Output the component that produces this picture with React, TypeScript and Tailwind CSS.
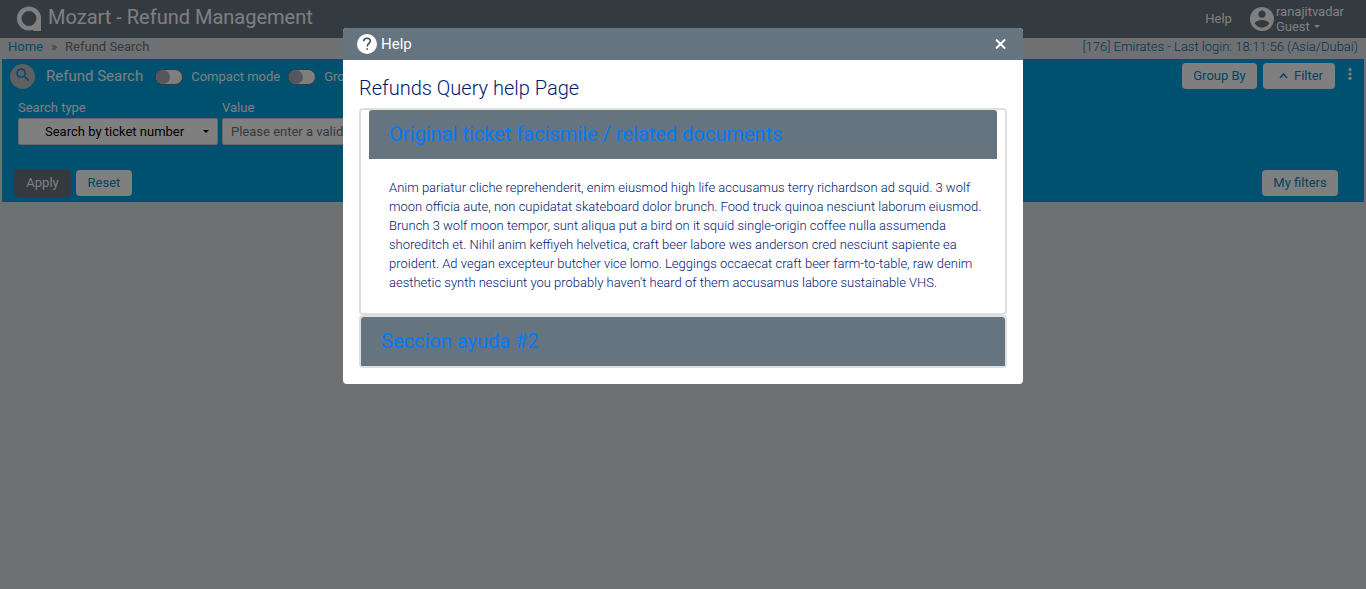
import { useState, type ReactNode } from 'react';

const lightButton =
  'flex h-[26px] items-center justify-center rounded bg-white text-[#008ac2]';

function Logo() {
  return (
    <svg className="h-[26px] w-[26px]" viewBox="0 0 26 26" aria-hidden="true">
      <circle cx="13" cy="12.500" r="9.800" fill="none" stroke="#fff" strokeWidth="4.600" />
      <path d="M20.500 14H25V25H17.500L16.500 21.500Z" fill="#fff" />
    </svg>
  );
}

function UserIcon() {
  return (
    <svg className="h-6 w-6" viewBox="2 2 20 20" fill="#fff" aria-hidden="true">
      <path d="M12 2C6.48 2 2 6.48 2 12s4.48 10 10 10 10-4.48 10-10S17.52 2 12 2zm0 3c1.66 0 3 1.34 3 3s-1.34 3-3 3-3-1.34-3-3 1.34-3 3-3zm0 14.2c-2.5 0-4.71-1.28-6-3.22.03-1.99 4-3.08 6-3.08 1.99 0 5.97 1.09 6 3.08-1.29 1.94-3.5 3.22-6 3.22z" />
    </svg>
  );
}

function SearchIcon() {
  return (
    <svg className="mb-[2px] h-[18px] w-[18px]" viewBox="0 0 24 24" fill="#0092cc" aria-hidden="true">
      <path d="M15.5 14h-.79l-.28-.27C15.41 12.59 16 11.11 16 9.5 16 5.91 13.09 3 9.5 3S3 5.91 3 9.5 5.91 16 9.5 16c1.61 0 3.09-.59 4.23-1.57l.27.28v.79l5 4.99L20.49 19l-4.99-5zm-6 0C7.01 14 5 11.99 5 9.5S7.01 5 9.5 5 14 7.01 14 9.5 11.99 14 9.5 14z" />
    </svg>
  );
}

function Toggle({ label }: { label: string }) {
  return (
    <label className="flex items-center gap-2 text-white">
      <input type="checkbox" className="peer sr-only" />
      <span className="flex h-4 w-[28px] items-center rounded-full border border-[#687582] bg-white peer-checked:justify-end">
        <span className="h-[14px] w-[14px] rounded-full bg-[#a9aebb]" />
      </span>
      <span className="whitespace-nowrap">{label}</span>
    </label>
  );
}

function TopBar() {
  return (
    <header className="flex h-[38px] items-center justify-between bg-[#667480] pl-4 pr-[22px] text-white">
      <div className="flex items-center gap-[6px]">
        <Logo />
        <h1 className="pb-1 text-xl leading-6">Mozart - Refund Management</h1>
      </div>
      <div className="flex items-center gap-[18px]">
        <a href="#help">Help</a>
        <button type="button" className="flex items-center gap-[2px] text-left">
          <UserIcon />
          <span className="leading-[15px]">
            <span className="block">ranajitvadar</span>
            <span className="flex items-center gap-1">
              Guest
              <svg className="h-[3px] w-[6px]" viewBox="0 0 6 3" fill="#fff" aria-hidden="true">
                <path d="M0 0h6L3 3z" />
              </svg>
            </span>
          </span>
        </button>
      </div>
    </header>
  );
}

function Breadcrumb() {
  return (
    <nav aria-label="Breadcrumb" className="flex h-[21px] justify-between px-2 leading-[18px]">
      <div className="flex gap-2">
        <a href="#home" className="text-[#009ad8]">Home</a>
        <span className="text-[#687582]">»</span>
        <span className="text-[#687582]">Refund Search</span>
      </div>
      <span className="font-light text-[#006aa8]">[176] Emirates - Last login: 18:11:56 (Asia/Dubai)</span>
    </nav>
  );
}

function SearchPanel() {
  return (
    <section className="mx-[2px] flex h-[143px] flex-col justify-between bg-[#00a2de] pb-[5px]">
      <div>
        <div className="flex justify-between pl-2 pr-[5px] pt-1">
          <div className="flex items-center">
            <span className="mr-[11px] flex h-[25px] w-[25px] items-center justify-center rounded-full bg-[#bcbec2]">
              <SearchIcon />
            </span>
            <h2 className="mr-3 text-[15px] text-white">Refund Search</h2>
            <div className="flex gap-2 pt-[2px]">
              <Toggle label="Compact mode" />
              <Toggle label="Group" />
            </div>
          </div>
          <div className="flex items-center gap-[6px]">
            <button type="button" className={`${lightButton} w-[75px]`}>Group By</button>
            <button type="button" className={`${lightButton} w-[72px] gap-[6px] pl-1`}>
              <svg className="h-[6px] w-[9px]" viewBox="0 0 9 6" fill="none" stroke="#0082c0" strokeWidth="1.5" aria-hidden="true">
                <path d="M1 5l3.500-4L8 5" />
              </svg>
              Filter
            </button>
            <button type="button" aria-label="More options" className="flex h-[26px] w-[18px] justify-center pt-[5px]">
              <svg className="h-3 w-1" viewBox="0 0 4 12" fill="#fff" aria-hidden="true">
                <circle cx="2" cy="1.700" r="1.600" />
                <circle cx="2" cy="6" r="1.600" />
                <circle cx="2" cy="10.300" r="1.600" />
              </svg>
            </button>
          </div>
        </div>
        <div className="flex gap-1 px-4 pt-[9px]">
          <div className="w-[200px]">
            <label htmlFor="type" className="block leading-5 text-white">Search type</label>
            <div className="relative">
              <select id="type" className="h-[27px] w-full appearance-none rounded-[2px] border border-[#d0d0d0] bg-white pl-[26px] text-black">
                <option>Search by ticket number</option>
              </select>
              <svg className="pointer-events-none absolute right-[9px] top-3 h-[3px] w-[6px]" viewBox="0 0 6 3" aria-hidden="true">
                <path d="M0 0h6L3 3z" />
              </svg>
            </div>
          </div>
          <div className="w-[200px]">
            <label htmlFor="value" className="block leading-5 text-white">Value</label>
            <input id="value" placeholder="Please enter a valid value" className="h-[27px] w-full rounded-[2px] border border-[#d0d0d0] bg-white px-2 placeholder:text-[#687582]" />
          </div>
        </div>
      </div>
      <div className="flex items-center justify-between pl-3 pr-[26px]">
        <div className="flex items-center gap-[5px]">
          <button type="button" className="h-7 w-[57px] rounded bg-[#667480] text-white">Apply</button>
          <button type="button" className={`${lightButton} w-14`}>Reset</button>
        </div>
        <button type="button" className={`${lightButton} w-[76px]`}>My filters</button>
      </div>
    </section>
  );
}

function HelpSection({ title, open, onToggle, children }: { title: string; open: boolean; onToggle: () => void; children: ReactNode }) {
  return (
    <div className={`rounded border-2 border-[#dfdfdf] ${open ? 'px-2' : ''}`}>
      <h3 className="rounded-t-[3px] bg-[#667480] text-xl text-[#007bff]">
        <button type="button" aria-expanded={open} onClick={onToggle} className="block h-[49px] w-full px-5 pb-[2px] text-left">
          {title}
        </button>
      </h3>
      {open && <div className="pb-[21px] pl-5 pr-3 pt-[19px] font-light leading-[19px]">{children}</div>}
    </div>
  );
}

function HelpDialog({ onClose }: { onClose: () => void }) {
  const [openSection, setOpenSection] = useState(1);
  const toggle = (n: number) => setOpenSection(openSection === n ? 0 : n);
  const text =
    "Anim pariatur cliche reprehenderit, enim eiusmod high life accusamus terry richardson ad squid. 3 wolf moon officia aute, non cupidatat skateboard dolor brunch. Food truck quinoa nesciunt laborum eiusmod. Brunch 3 wolf moon tempor, sunt aliqua put a bird on it squid single-origin coffee nulla assumenda shoreditch et. Nihil anim keffiyeh helvetica, craft beer labore wes anderson cred nesciunt sapiente ea proident. Ad vegan excepteur butcher vice lomo. Leggings occaecat craft beer farm-to-table, raw denim aesthetic synth nesciunt you probably haven't heard of them accusamus labore sustainable VHS.";
  return (
    <div className="fixed inset-0 flex items-start justify-center overflow-auto bg-black/50 pt-7">
      <div role="dialog" aria-modal="true" aria-labelledby="help-title" className="w-full max-w-[680px] overflow-hidden rounded bg-white">
        <div className="flex h-8 items-center justify-between bg-[#667480] pl-[14px] pr-[13px] text-white">
          <div className="flex items-center gap-1">
            <span aria-hidden="true" className="flex h-5 w-5 items-center justify-center rounded-full bg-white">
              <svg className="h-[14px] w-[10px]" viewBox="0 0 10 14" fill="none" stroke="#454d56" strokeWidth="1.500">
                <path d="M1.700 4.200C1.700 2.200 3 1.200 5 1.200S8.300 2.300 8.300 4C8.300 6.400 5.200 6.500 5.200 9.500" />
                <path d="M4.400 12h1.600" strokeWidth="1.700" />
              </svg>
            </span>
            <h2 id="help-title" className="text-[15px]">Help</h2>
          </div>
          <button type="button" aria-label="Close" onClick={onClose} className="flex h-5 w-5 items-center justify-center">
            <svg className="h-[10px] w-[11px]" viewBox="0 0 11 10" stroke="#fff" strokeWidth="2" aria-hidden="true">
              <path d="M1 .500l9 9M10 .500l-9 9" />
            </svg>
          </button>
        </div>
        <div className="p-4 text-[#001a72]">
          <h2 className="mb-2 text-xl font-light leading-6">Refunds Query help Page</h2>
          <HelpSection title="Original ticket facismile / related documents" open={openSection === 1} onToggle={() => toggle(1)}>
            {text}
          </HelpSection>
          <HelpSection title="Seccion ayuda #2" open={openSection === 2} onToggle={() => toggle(2)}>
            {text}
          </HelpSection>
        </div>
      </div>
    </div>
  );
}

export default function App() {
  const [helpOpen, setHelpOpen] = useState(true);
  return (
    <div className="min-h-screen bg-[#dee0e3] font-['Roboto',sans-serif] text-[13px]">
      <TopBar />
      <Breadcrumb />
      <SearchPanel />
      {helpOpen && <HelpDialog onClose={() => setHelpOpen(false)} />}
    </div>
  );
}
